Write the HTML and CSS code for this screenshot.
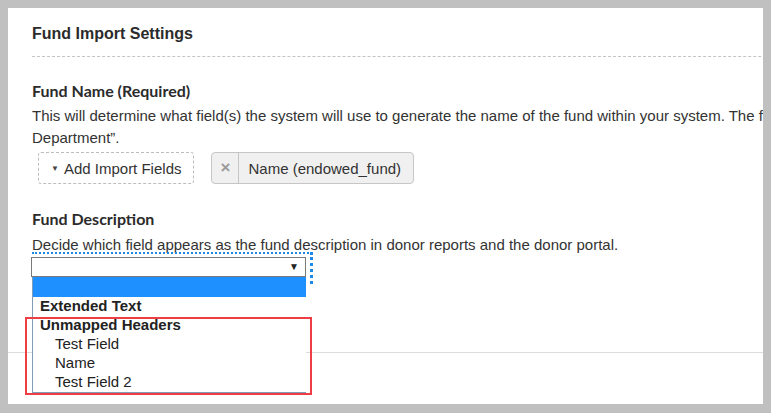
FILE: index.html
```html
<!DOCTYPE html>
<html lang="en">
<head>
<meta charset="utf-8">
<title>Fund Import Settings</title>
<link rel="stylesheet" href="styles.css">
</head>
<body>
<div class="panel">
  <div class="panel-body">
    <h2 class="panel-title">Fund Import Settings</h2>

    <section class="field field-name">
      <h3 class="field-label">Fund Name (Required)</h3>
      <p class="field-help">This will determine what field(s) the system will use to generate the name of the fund within your system. The fund name can be a combination of fields, such as “Fund Code - <br>Department”.</p>
      <div class="chips">
        <button class="add-fields" type="button"><span class="caret">▼</span>Add Import Fields</button>
        <div class="chip"><span class="chip-remove">×</span><span class="chip-text">Name (endowed_fund)</span></div>
      </div>
    </section>

    <section class="field field-desc">
      <h3 class="field-label">Fund Description</h3>
      <p class="field-help">Decide which field appears as the fund description in donor reports and the donor portal.</p>
      <div class="select-wrap">
        <div class="select"><span class="select-arrow">▼</span></div>
        <ul class="listbox">
          <li class="opt opt-selected"></li>
          <li class="opt opt-group">Extended Text</li>
          <li class="opt opt-group">Unmapped Headers</li>
          <li class="opt opt-child">Test Field</li>
          <li class="opt opt-child">Name</li>
          <li class="opt opt-child">Test Field 2</li>
        </ul>
        <div class="highlight-box"></div>
      </div>
    </section>
  </div>
  <div class="panel-footer"></div>
</div>
</body>
</html>
```
FILE: styles.css
```css
html, body {
  margin: 0;
  padding: 0;
}
body {
  background: #c0c0c0;
  font-family: "Liberation Sans", Arial, sans-serif;
  color: #333;
  width: 771px;
  height: 413px;
  overflow: hidden;
}
.panel {
  margin: 8px 0 0 8px;
  width: 755px;
  height: 396px;
  background: #fff;
  overflow: hidden;
  display: flex;
  flex-direction: column;
}
.panel-body {
  padding: 16px 0 75px 24px;
  width: 1200px;
}
.panel-title {
  margin: 0;
  font-size: 16px;
  line-height: 20px;
  font-weight: bold;
  color: #2b2b2b;
  padding-bottom: 12px;
  border-bottom: 1px dashed #c4c4c4;
}
.field-name {
  margin-top: 24px;
}
.field-desc {
  margin-top: 25px;
}
.field-label {
  margin: 0;
  font-family: Lato, "Liberation Sans", sans-serif;
  font-weight: 700;
  font-size: 16px;
  line-height: 20px;
  color: #2b2b2b;
}
.field-help {
  margin: 4px 0 0;
  font-size: 15px;
  line-height: 22px;
  white-space: nowrap;
}
.field-desc .field-help {
  margin-top: 5px;
}
.chips {
  display: flex;
  align-items: center;
  gap: 17px;
  margin: 3px 0 0 6px;
}
.add-fields {
  height: 32px;
  padding: 0 12px 0 12px;
  border: 1px dashed #bdbdbd;
  border-radius: 3px;
  background: #fff;
  font-family: "Liberation Sans", Arial, sans-serif;
  font-size: 15px;
  color: #333;
  display: flex;
  align-items: center;
}
.caret {
  font-size: 8px;
  margin-right: 5px;
  color: #444;
}
.chip {
  display: flex;
  height: 32px;
  box-sizing: border-box;
  border: 1px solid #c6c6c6;
  border-radius: 4px;
  background: #f0f0f0;
  font-size: 15px;
  align-items: stretch;
}
.chip-remove {
  width: 26px;
  display: flex;
  align-items: center;
  justify-content: center;
  border-right: 1px solid #c6c6c6;
  color: #9a9a9a;
  font-size: 17px;
  font-weight: bold;
}
.chip-text {
  display: flex;
  align-items: center;
  padding: 0 12px 0 9px;
  color: #333;
}
.select-wrap {
  position: relative;
  margin: 1px 0 0 -1px;
  width: 275px;
}
.select-wrap::before {
  content: "";
  position: absolute;
  left: 1px;
  top: -5px;
  width: 278px;
  height: 30px;
  border-top: 2px dotted #1e88e5;
  border-right: 3px dotted #1e88e5;
}
.select {
  height: 20px;
  box-sizing: border-box;
  border: 1px solid #7a7a7a;
  background: #fff;
  position: relative;
}
.select-arrow {
  position: absolute;
  right: 6px;
  top: 3px;
  font-size: 10px;
  color: #222;
}
.listbox {
  position: absolute;
  left: 1px;
  top: 20px;
  width: 274px;
  margin: 0;
  padding: 0;
  list-style: none;
  background: #fff;
  border-left: 1px solid #7f9db9;
  border-bottom: 1px solid #7f9db9;
  box-sizing: border-box;
  height: 116px;
}
.opt {
  height: 19px;
  line-height: 18px;
  font-size: 15px;
  padding-left: 7px;
  color: #222;
}
.opt-selected {
  height: 20px;
  background: #1e90ff;
}
.opt-group {
  font-weight: bold;
}
.opt-child {
  padding-left: 22px;
}
.highlight-box {
  position: absolute;
  left: -6px;
  top: 60px;
  width: 287px;
  height: 78px;
  box-sizing: border-box;
  border: 2px solid #ee3d45;
}
.panel-footer {
  border-top: 1px solid #dcdcdc;
  flex: 1;
}
```
